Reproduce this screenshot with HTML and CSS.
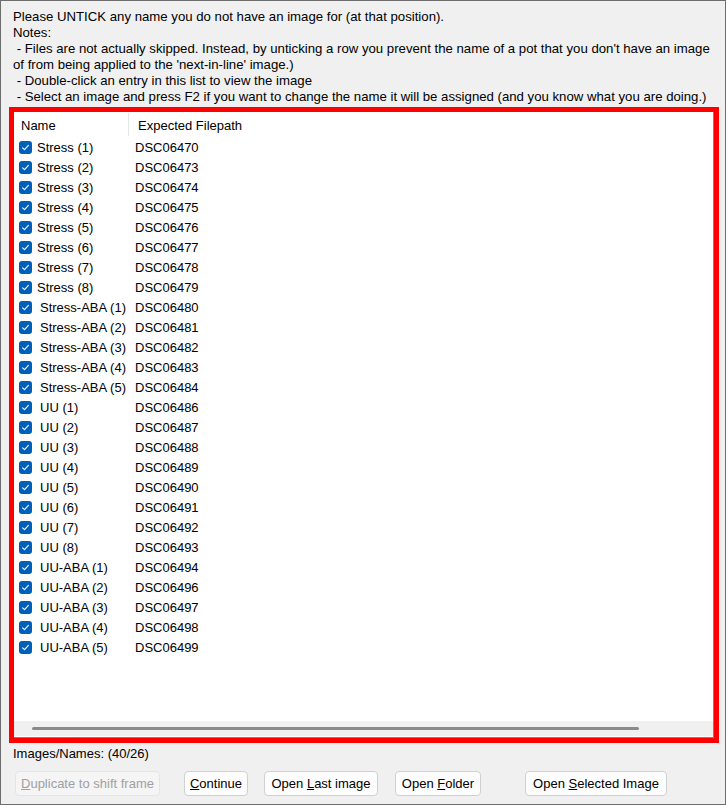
FILE: index.html
```html
<!DOCTYPE html>
<html>
<head>
<meta charset="utf-8">
<link rel="stylesheet" href="styles.css">
</head>
<body>
<div class="window">
  <div class="notes">
    <div class="line">Please UNTICK any name you do not have an image for (at that position).</div>
    <div class="line">Notes:</div>
    <div class="line">&nbsp;- Files are not actually skipped. Instead, by unticking a row you prevent the name of a pot that you don't have an image</div>
    <div class="line">of from being applied to the 'next-in-line' image.)</div>
    <div class="line">&nbsp;- Double-click an entry in this list to view the image</div>
    <div class="line">&nbsp;- Select an image and press F2 if you want to change the name it will be assigned (and you know what you are doing.)</div>
  </div>
  <div class="frame">
    <div class="list">
      <div class="header">
        <div class="hcell hname">Name</div>
        <div class="hdiv"></div>
        <div class="hcell hpath">Expected Filepath</div>
      </div>
      <div class="rows" id="rows"></div>
      <div class="hscroll"><div class="thumb"></div></div>
    </div>
  </div>
  <div class="status">Images/Names: (40/26)</div>
  <div class="buttons">
    <button class="btn disabled b-dup"><u>D</u>uplicate to shift frame</button>
    <button class="btn b-cont"><u>C</u>ontinue</button>
    <button class="btn b-last">Open <u>L</u>ast image</button>
    <button class="btn b-folder">Open <u>F</u>older</button>
    <button class="btn b-sel">Open <u>S</u>elected Image</button>
  </div>
</div>
<script src="script.js"></script>
</body>
</html>
```
FILE: script.js
```js
var data = [
  ["Stress (1)","DSC06470",0],["Stress (2)","DSC06473",0],["Stress (3)","DSC06474",0],["Stress (4)","DSC06475",0],
  ["Stress (5)","DSC06476",0],["Stress (6)","DSC06477",0],["Stress (7)","DSC06478",0],["Stress (8)","DSC06479",0],
  ["Stress-ABA (1)","DSC06480",1],["Stress-ABA (2)","DSC06481",1],["Stress-ABA (3)","DSC06482",1],["Stress-ABA (4)","DSC06483",1],["Stress-ABA (5)","DSC06484",1],
  ["UU (1)","DSC06486",1],["UU (2)","DSC06487",1],["UU (3)","DSC06488",1],["UU (4)","DSC06489",1],
  ["UU (5)","DSC06490",1],["UU (6)","DSC06491",1],["UU (7)","DSC06492",1],["UU (8)","DSC06493",1],
  ["UU-ABA (1)","DSC06494",1],["UU-ABA (2)","DSC06496",1],["UU-ABA (3)","DSC06497",1],["UU-ABA (4)","DSC06498",1],["UU-ABA (5)","DSC06499",1]
];
var box = '<svg class="cb" width="13" height="13" viewBox="0 0 13 13"><rect x="0" y="0" width="13" height="13" rx="3" fill="#005fb8"/><path d="M3.6 6.9 L5.5 8.7 L9.4 4.4" fill="none" stroke="#ffffff" stroke-width="1.1" stroke-linecap="round" stroke-linejoin="round"/></svg>';
var html = "";
data.forEach(function (d) {
  html += '<div class="row"><div class="cname">' + box + '<span class="ntext' + (d[2] ? ' wide' : '') + '">' + d[0] + '</span></div><div class="cpath">' + d[1] + '</div></div>';
});
document.getElementById("rows").innerHTML = html;
```
FILE: styles.css
```css
html, body {
  margin: 0;
  padding: 0;
}
body {
  font-family: "Liberation Sans", Arial, sans-serif;
  font-size: 13px;
  color: #000;
}
.window {
  width: 726px;
  height: 805px;
  box-sizing: border-box;
  border: 1px solid #6e6e6e;
  background: #f0f0f0;
  display: flex;
  flex-direction: column;
}
.notes {
  padding: 8px 0 0 12px;
  font-size: 13.2px;
}
.line {
  height: 16px;
  line-height: 16px;
  white-space: nowrap;
}
.frame {
  margin: 2px 0 0 8px;
  width: 710px;
  height: 636px;
  box-sizing: border-box;
  border: 5px solid #ff0000;
  display: flex;
}
.list {
  flex: 1;
  background: #fff;
  border-right: 1px solid #838383;
  border-bottom: 1px solid #838383;
  display: flex;
  flex-direction: column;
}
.header {
  height: 25px;
  display: flex;
  align-items: center;
}
.hcell {
  padding-top: 1px;
}
.hname {
  width: 107px;
  padding-left: 7px;
}
.hdiv {
  width: 1px;
  align-self: stretch;
  margin: 1px 0 1px 0;
  background: #e5e5e5;
}
.hpath {
  padding-left: 9px;
}
.rows {
  flex: 1;
}
.row {
  height: 20px;
  display: flex;
  align-items: center;
}
.cname {
  width: 121px;
  display: flex;
  align-items: center;
}
.cb {
  margin-left: 5px;
  flex: none;
}
.ntext {
  margin-left: 5px;
  white-space: nowrap;
}
.ntext.wide {
  margin-left: 8px;
}
.hscroll {
  height: 15px;
  background: #f0f0f0;
  border-bottom: 1px solid #fff;
  display: flex;
  align-items: center;
}
.thumb {
  margin-left: 18px;
  width: 607px;
  height: 3px;
  border-radius: 2px;
  background: #8a8a8a;
}
.status {
  margin: 3px 0 0 12px;
  height: 16px;
  line-height: 16px;
}
.buttons {
  margin-top: 9px;
  display: flex;
  padding-left: 14px;
}
.btn {
  height: 25px;
  box-sizing: border-box;
  border: 1px solid #d0d0d0;
  border-radius: 4px;
  background: #fdfdfd;
  font-family: "Liberation Sans", Arial, sans-serif;
  font-size: 13px;
  color: #000;
  padding: 0;
  text-align: center;
}
.btn.disabled {
  background: #f5f5f5;
  border-color: #e5e5e5;
  color: #a0a0a0;
}
.b-dup { width: 145px; }
.b-cont { width: 64px; margin-left: 24px; }
.b-last { width: 114px; margin-left: 16px; }
.b-folder { width: 86px; margin-left: 17px; }
.b-sel { width: 142px; margin-left: 44px; }
```
